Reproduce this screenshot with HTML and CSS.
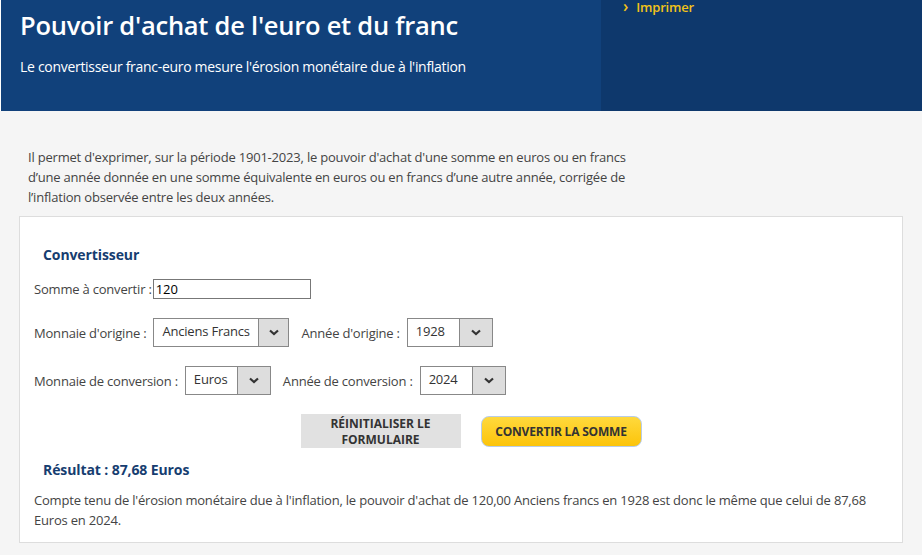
FILE: index.html
```html
<!DOCTYPE html>
<html lang="fr">
<head>
    <meta charset="UTF-8">
    <title>Pouvoir d'achat de l'euro et du franc</title>
    <link rel="stylesheet" href="styles.css">
</head>
<body>
    <div class="banner">
        <div class="banner-main">
            <h1>Pouvoir d'achat de l'euro et du franc</h1>
            <p class="subtitle">Le convertisseur franc-euro mesure l'érosion monétaire due à l'inflation</p>
        </div>
        <div class="banner-side">
            <a class="print-link" href="#"><span class="chev">&#8250;</span> Imprimer</a>
        </div>
    </div>

    <div class="content">
        <p class="intro">Il permet d'exprimer, sur la période 1901-2023, le pouvoir d'achat d'une somme en euros ou en francs d’une année donnée en une somme équivalente en euros ou en francs d’une autre année, corrigée de l’inflation observée entre les deux années.</p>

        <div class="box">
            <h2>Convertisseur</h2>
            <div class="row first">
                <label>Somme à convertir :</label>
                <input type="text" class="amount" value="120">
            </div>
            <div class="row">
                <label>Monnaie d'origine :</label>
                <div class="select w-currency1">
                    <span class="val">Anciens Francs</span>
                    <span class="arrow"><svg width="10" height="7" viewBox="0 0 10 7"><path d="M1 1.5 L5 5 L9 1.5" fill="none" stroke="#333" stroke-width="2.2"/></svg></span>
                </div>
                <label class="second">Année d'origine :</label>
                <div class="select w-year">
                    <span class="val">1928</span>
                    <span class="arrow"><svg width="10" height="7" viewBox="0 0 10 7"><path d="M1 1.5 L5 5 L9 1.5" fill="none" stroke="#333" stroke-width="2.2"/></svg></span>
                </div>
            </div>
            <div class="row">
                <label>Monnaie de conversion :</label>
                <div class="select w-currency2">
                    <span class="val">Euros</span>
                    <span class="arrow"><svg width="10" height="7" viewBox="0 0 10 7"><path d="M1 1.5 L5 5 L9 1.5" fill="none" stroke="#333" stroke-width="2.2"/></svg></span>
                </div>
                <label class="second">Année de conversion :</label>
                <div class="select w-year">
                    <span class="val">2024</span>
                    <span class="arrow"><svg width="10" height="7" viewBox="0 0 10 7"><path d="M1 1.5 L5 5 L9 1.5" fill="none" stroke="#333" stroke-width="2.2"/></svg></span>
                </div>
            </div>
            <div class="actions">
                <button class="btn-reset">Réinitialiser le formulaire</button>
                <button class="btn-convert">Convertir la somme</button>
            </div>
            <h2 class="result-title">Résultat : 87,68 Euros</h2>
            <p class="result">Compte tenu de l'érosion monétaire due à l'inflation, le pouvoir d'achat de 120,00 Anciens francs en 1928 est donc le même que celui de 87,68 Euros en 2024.</p>
        </div>
    </div>
</body>
</html>
```

FILE: styles.css
```css
body {
    margin: 0;
    font-family: "Open Sans", Arial, sans-serif;
    background-color: #f5f5f5;
    color: #444;
    letter-spacing: -0.2px;
}
.banner {
    display: flex;
    height: 111px;
    border-left: 1px solid #fff;
}
.banner-main {
    width: 581px;
    background-color: #11417b;
    padding-left: 19px;
}
.banner-side {
    flex: 1;
    background-color: #0e386c;
    padding-left: 22px;
}
h1 {
    margin: 8px 0 0;
    color: #fff;
    font-size: 25.5px;
    font-weight: 600;
    letter-spacing: -0.25px;
}
.subtitle {
    margin: 15px 0 0;
    color: #fff;
    font-size: 14px;
    letter-spacing: -0.3px;
}
.print-link {
    display: block;
    margin-top: -5px;
    color: #f2c318;
    font-size: 13px;
    font-weight: 600;
    text-decoration: none;
}
.chev {
    margin-right: 5px;
    font-size: 16px;
}
.content {
    padding: 36px 19px 0 19px;
    width: 884px;
}
.intro {
    margin: 0 0 9px 9px;
    width: 615px;
    font-size: 13px;
    line-height: 20px;
}
.box {
    background-color: #fff;
    border: 1px solid #ddd;
    padding: 22px 14px 12px 14px;
}
h2 {
    margin: 6px 0 0 9px;
    color: #163d70;
    font-size: 14px;
    font-weight: 700;
    letter-spacing: -0.1px;
}
.row {
    display: flex;
    align-items: center;
    margin-top: 19px;
    font-size: 13px;
}
.row.first {
    margin-top: 15px;
}
.row label {
    margin-right: 7px;
    white-space: nowrap;
}
.row label.second {
    margin-left: 12px;
    margin-right: 7px;
}
.amount {
    width: 152px;
    height: 16px;
    padding: 1px 2px;
    border: 1px solid #777;
    font-family: "Open Sans", Arial, sans-serif;
    font-size: 13px;
    color: #000;
    margin-left: -6px;
}
.select {
    display: flex;
    height: 27px;
    border: 1px solid #888;
    background-color: #fff;
    color: #333;
    white-space: nowrap;
}
.select .val {
    flex: 1;
    padding: 3px 8px 0 8px;
}
.select .arrow {
    width: 32px;
    border-left: 1px solid #888;
    background-color: #ddd;
    display: flex;
    align-items: center;
    justify-content: center;
}
.w-currency1 { width: 134px; }
.w-currency2 { width: 84px; }
.w-year { width: 84px; }
.actions {
    display: flex;
    justify-content: center;
    align-items: center;
    gap: 20px;
    margin-top: 19px;
    padding-left: 20px;
}
.btn-reset {
    width: 160px;
    height: 34px;
    border: none;
    background-color: #e1e1e1;
    color: #333;
    font-family: "Open Sans", Arial, sans-serif;
    font-size: 12px;
    font-weight: 700;
    text-transform: uppercase;
    line-height: 16px;
    padding: 1px 20px 0;
}
.btn-convert {
    width: 161px;
    height: 31px;
    border: 1px solid #b9cde6;
    border-radius: 8px;
    background: linear-gradient(#ffd93d, #fcc40a);
    color: #333;
    font-family: "Open Sans", Arial, sans-serif;
    font-size: 12px;
    font-weight: 700;
    text-transform: uppercase;
    letter-spacing: -0.2px;
}
.result-title {
    margin-top: 12px;
}
.result {
    margin: 11px 0 0 0;
    font-size: 13px;
    line-height: 20px;
}
```
